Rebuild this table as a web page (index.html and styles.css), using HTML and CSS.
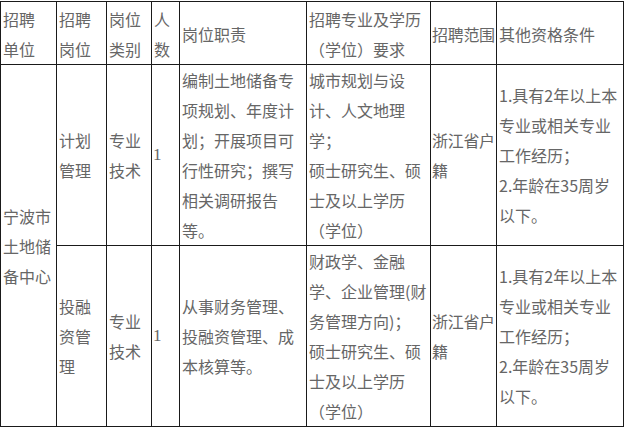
FILE: index.html
```html
<!DOCTYPE html>
<html lang="zh">
<head>
<meta charset="utf-8">
<link rel="stylesheet" href="styles.css">
</head>
<body>
<table class="grid">
  <colgroup>
    <col class="c1"><col class="c2"><col class="c3"><col class="c4">
    <col class="c5"><col class="c6"><col class="c7"><col class="c8">
  </colgroup>
  <tr class="head">
    <td>招聘<br>单位</td>
    <td>招聘<br>岗位</td>
    <td>岗位<br>类别</td>
    <td>人<br>数</td>
    <td>岗位职责</td>
    <td>招聘专业及学历<br>（学位）要求</td>
    <td class="tight">招聘范围</td>
    <td>其他资格条件</td>
  </tr>
  <tr class="row">
    <td rowspan="2">宁波市<br>土地储<br>备中心</td>
    <td>计划<br>管理</td>
    <td>专业<br>技术</td>
    <td class="num">1</td>
    <td>编制土地储备专<br>项规划、年度计<br>划；开展项目可<br>行性研究；撰写<br>相关调研报告<br>等。</td>
    <td>城市规划与设<br>计、人文地理<br>学；<br>硕士研究生、硕<br>士及以上学历<br>（学位）</td>
    <td class="tight">浙江省户<br>籍</td>
    <td>1.具有2年以上本<br>专业或相关专业<br>工作经历；<br>2.年龄在35周岁<br>以下。</td>
  </tr>
  <tr class="row">
    <td>投融<br>资管<br>理</td>
    <td>专业<br>技术</td>
    <td class="num">1</td>
    <td>从事财务管理、<br>投融资管理、成<br>本核算等。</td>
    <td>财政学、金融<br>学、企业管理(财<br>务管理方向)；<br>硕士研究生、硕<br>士及以上学历<br>（学位）</td>
    <td class="tight">浙江省户<br>籍</td>
    <td>1.具有2年以上本<br>专业或相关专业<br>工作经历；<br>2.年龄在35周岁<br>以下。</td>
  </tr>
</table>
</body>
</html>
```
FILE: styles.css
```css
html, body {
  margin: 0;
  padding: 0;
  background: #ffffff;
}
body {
  padding: 1px 0 0 0;
}
.grid {
  border-collapse: collapse;
  table-layout: fixed;
  width: 624px;
  font-family: "Noto Sans CJK SC", "Noto Sans", sans-serif;
  font-size: 16px;
  line-height: 30px;
  color: #666666;
}
.grid td {
  border: 1px solid #1a1a1a;
  padding: 0 0 0 2px;
  vertical-align: middle;
  white-space: nowrap;
}
.c1 { width: 56px; }
.c2 { width: 50px; }
.c3 { width: 45px; }
.c4 { width: 28px; }
.c5 { width: 127px; }
.c6 { width: 124px; }
.c7 { width: 66px; }
.c8 { width: 127px; }
.head td {
  height: 59px;
  padding-top: 2px;
}
.row td {
  height: 179px;
}
.grid td.tight {
  padding-left: 1px;
  letter-spacing: -0.3px;
}
.grid td.num {
  font-family: "Liberation Serif", serif;
  font-size: 17px;
  padding-left: 1px;
}
```
